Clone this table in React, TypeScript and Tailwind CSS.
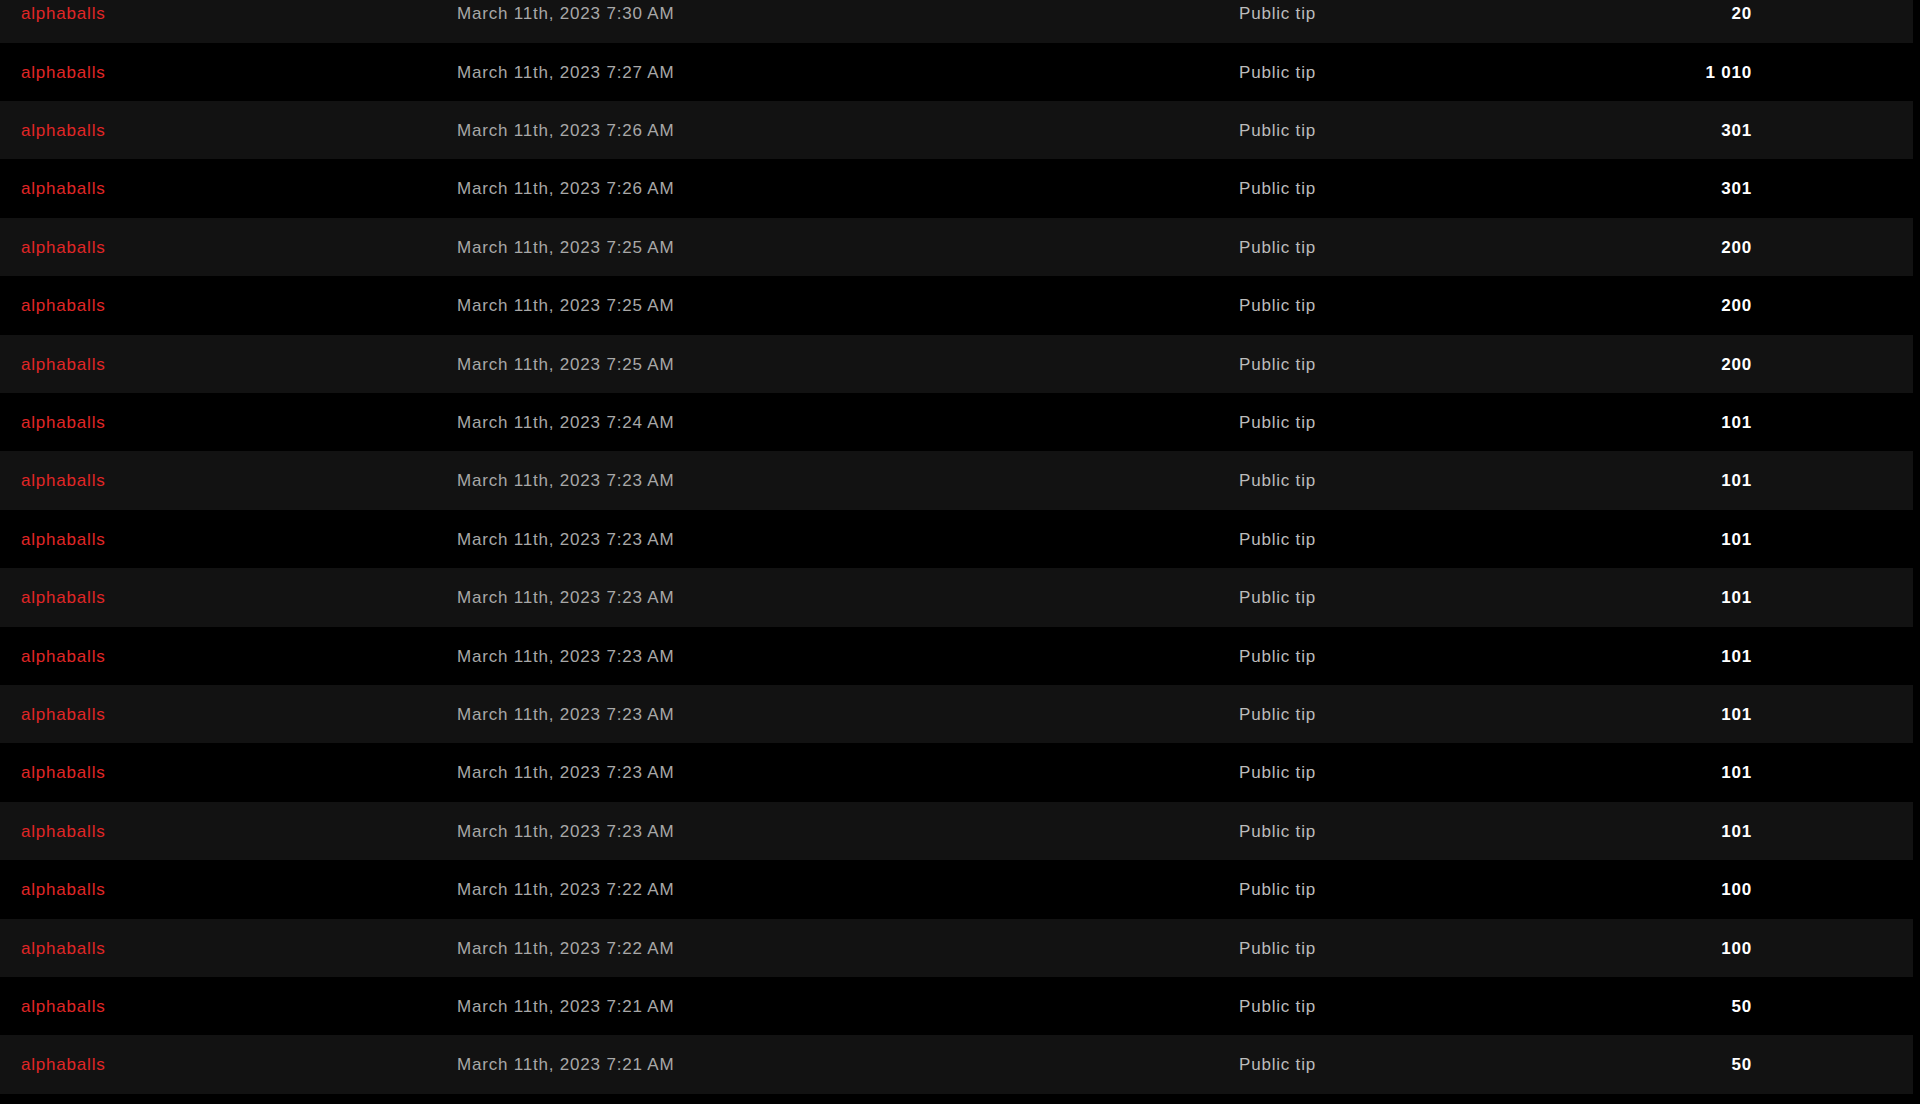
import React from "react";

const rows: [string, string][] = [
  ["7:30 AM", "20"],
  ["7:27 AM", "1 010"],
  ["7:26 AM", "301"],
  ["7:26 AM", "301"],
  ["7:25 AM", "200"],
  ["7:25 AM", "200"],
  ["7:25 AM", "200"],
  ["7:24 AM", "101"],
  ["7:23 AM", "101"],
  ["7:23 AM", "101"],
  ["7:23 AM", "101"],
  ["7:23 AM", "101"],
  ["7:23 AM", "101"],
  ["7:23 AM", "101"],
  ["7:23 AM", "101"],
  ["7:22 AM", "100"],
  ["7:22 AM", "100"],
  ["7:21 AM", "50"],
  ["7:21 AM", "50"],
];

export default function App() {
  return (
    <div
      className="h-[1104px] w-full overflow-hidden bg-black"
      style={{ fontFamily: '"Liberation Sans", Arial, sans-serif' }}
    >
      <div className="-mt-[15.7px] flex w-[1913px] flex-col">
        {rows.map(([time, amount], i) => (
          <div
            key={i}
            className={`flex h-[58.4px] shrink-0 items-center pl-[21px] pt-[1px] text-[17px] tracking-[0.8px] ${
              i % 2 === 0 ? "bg-[#121212]" : "bg-black"
            }`}
          >
            <div className="w-[436px] text-[#e02626]">alphaballs</div>
            <div className="w-[782px] text-[#a8a8a8]">March 11th, 2023 {time}</div>
            <div className="w-[400px] text-[#bcbcbc]">Public tip</div>
            <div className="w-[113px] text-right font-bold text-white">{amount}</div>
          </div>
        ))}
      </div>
    </div>
  );
}
